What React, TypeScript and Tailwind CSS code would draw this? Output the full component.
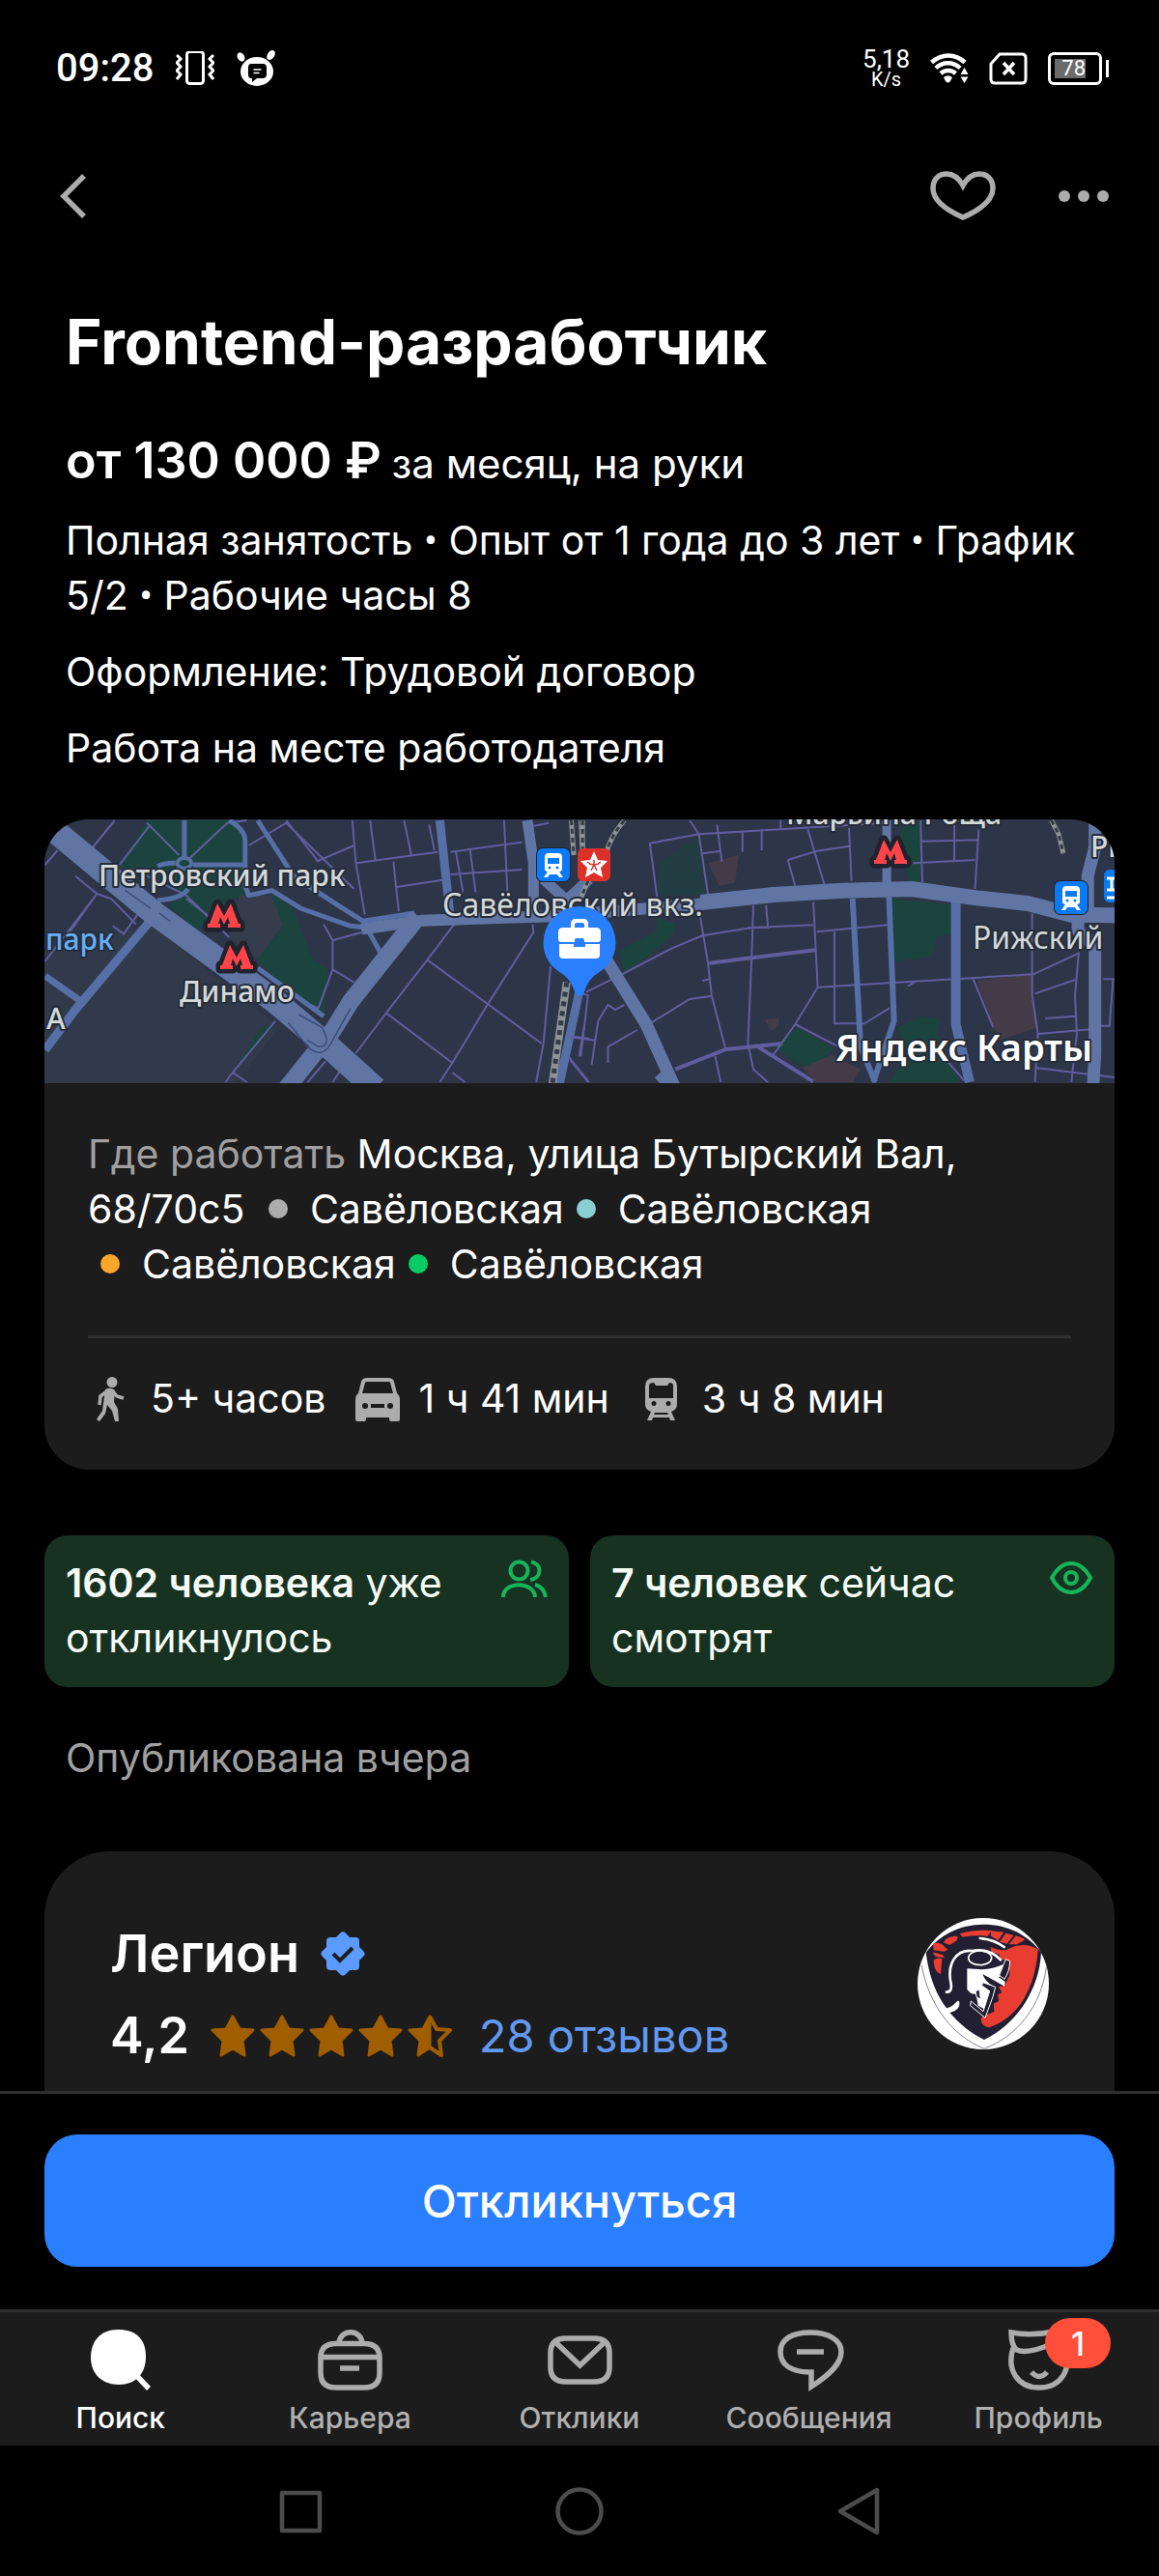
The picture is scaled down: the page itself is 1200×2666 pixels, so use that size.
import React from "react";

function VibrateIcon() {
  return (
    <svg viewBox="0 0 40 36" className="h-9 w-10" fill="none" stroke="#fff" strokeWidth="3" aria-hidden="true">
      <rect x="11.500" y="0.500" width="17" height="33" rx="3" />
      <path d="M1 4l4 4-4 4 4 4-4 4 4 4-4 5M39 4l-4 4 4 4-4 4 4 4-4 4 4 5" />
    </svg>
  );
}

function BotIcon() {
  return (
    <svg viewBox="0 0 40 38" className="h-[38px] w-10" aria-hidden="true">
      <ellipse cx="21" cy="22" rx="17" ry="15" fill="#fff" />
      <ellipse cx="4.500" cy="7" rx="3.600" ry="5" transform="rotate(-30 4.500 7)" fill="#fff" />
      <ellipse cx="35.500" cy="5" rx="3.600" ry="5.500" transform="rotate(35 35.500 5)" fill="#fff" />
      <path d="M15 14h12q4 0 4 4v7q0 4-4 4h-6l-5 4v-4h-1q-3 0-3-4v-7q0-4 3-4z" fill="#000" />
      <path d="M17.500 20h8M17.500 23.500h6" stroke="#fff" strokeWidth="1.500" />
    </svg>
  );
}

function WifiIcon() {
  return (
    <svg viewBox="0 0 40 34" className="h-[34px] w-10" fill="none" stroke="#fff" strokeWidth="4.500" aria-hidden="true">
      <path d="M1.500 10.500C12 1 26 1 36 10.500" />
      <path d="M6 16.500c7-7 18-7 25 0" />
      <path d="M11 22c4.500-4 11-4 15.500 0" />
      <path d="M14 26q4.500-3.500 9 0l-2 4q-2.500 3-5 0z" fill="#fff" stroke="none" />
      <path d="M35.500 16l4 7h-8zM35.500 32l4-6.500h-8z" fill="#fff" stroke="none" />
    </svg>
  );
}

function SimIcon() {
  return (
    <svg viewBox="0 0 40 34" className="h-[34px] w-10" fill="none" stroke="#fff" strokeWidth="3" aria-hidden="true">
      <path d="M11 2h23q4 0 4 4v22q0 4-4 4H6q-4 0-4-4V12z" />
      <path d="M15 11l11 12M26 11L15 23" strokeWidth="3.500" />
    </svg>
  );
}

function Battery() {
  return (
    <div className="flex items-center gap-1">
      <div className="flex h-[34px] w-14 rounded-md border-[3px] border-white p-1">
        <div className="flex w-8 items-center justify-end bg-[#6b6b6b] font-[Roboto] text-[22px] leading-none text-white">
          78
        </div>
      </div>
      <div className="h-[18px] w-[3px] bg-white" />
    </div>
  );
}

function StatusBar() {
  return (
    <div className="flex h-[142px] items-center justify-between pr-[52px] pl-[58px] font-[Roboto]">
      <div className="flex items-center gap-[23px]">
        <span className="text-[40px] leading-none font-medium">09:28</span>
        <VibrateIcon />
        <BotIcon />
      </div>
      <div className="flex items-center gap-[21px]">
        <div className="flex flex-col items-center">
          <span className="text-[26px] leading-[22px]">5,18</span>
          <span className="text-[20px] leading-5">K/s</span>
        </div>
        <WifiIcon />
        <SimIcon />
        <Battery />
      </div>
    </div>
  );
}

function Header() {
  return (
    <header className="flex h-[122px] items-center justify-between pr-[50px] pl-[61px]">
      <button type="button" aria-label="Назад">
        <svg viewBox="0 0 28 48" className="h-12 w-7" fill="none" stroke="#acacac" strokeWidth="5.500">
          <path d="M26 3L5 24l21 21" />
        </svg>
      </button>
      <div className="flex items-center gap-[61px]">
        <button type="button" aria-label="В избранное">
          <svg viewBox="0 0 72 56" className="h-14 w-[72px]" fill="none" stroke="#acacac" strokeWidth="5.500">
            <path d="M36 17C31 8 26 5 19 5 10.500 5 5 11 5 20c0 12 13 22 31 30 18-8 31-18 31-30 0-9-5.500-15-14-15-7 0-12 3-17 12z" />
          </svg>
        </button>
        <button type="button" aria-label="Ещё">
          <svg viewBox="0 0 56 14" className="h-[14px] w-14" fill="#acacac">
            <circle cx="8" cy="7" r="6" />
            <circle cx="28" cy="7" r="6" />
            <circle cx="48" cy="7" r="6" />
          </svg>
        </button>
      </div>
    </header>
  );
}

function Metro({ x, y }: { x: number; y: number }) {
  return (
    <path
      transform={`translate(${x} ${y})`}
      d="M0 25v-4h2L10 0l7 13L24 0l8 21h2v4H21v-4h2l-2-7-4 8-4-8-2 7h2v4z"
      fill="#ff4449"
      stroke="#20232d"
      strokeWidth="9"
      strokeLinejoin="round"
      paintOrder="stroke"
    />
  );
}

function StationSign({ x, y }: { x: number; y: number }) {
  return (
    <g transform={`translate(${x} ${y})`}>
      <rect x="-1" y="-1" width="36" height="36" rx="7" fill="#20232d" />
      <rect width="34" height="34" rx="6" fill="#0a7af5" />
      <path
        fillRule="evenodd"
        fill="#fff"
        d="M12 5h10q4 0 4 4v12q0 3-3 3l4 6h-4l-2-3h-8l-2 3H7l4-6q-3 0-3-3V9q0-4 4-4zm-1 5v6h12v-6zM13 18.500a1.500 1.500 0 1 0 0 3 1.500 1.500 0 0 0 0-3zm8 0a1.500 1.500 0 1 0 0 3 1.500 1.500 0 0 0 0-3z"
      />
    </g>
  );
}

function CityMap() {
  return (
    <svg
      viewBox="0 0 1108 273"
      preserveAspectRatio="xMidYMid slice"
      className="block h-[273px] w-full"
      fontFamily="'Noto Sans', sans-serif"
      role="img"
      aria-label="Карта"
    >
      <rect width="1108" height="273" fill="#2d3548" />

      {/* West half */}
      <g transform="matrix(0.3699 0 0 0.33333 -16 -18)">
        <path d="M0 460L340 380 700 700 560 900H0z" fill="#313a4a" />
        <path d="M330 57H590L605 120V200L620 290 560 300 470 400 390 320 440 290 250 200z" fill="#1c443f" />
        <path d="M680 285L740 330 790 480 835 520 825 670 750 610 640 490 700 400z" fill="#1c443f" />
        <path d="M650 700L690 690 570 840z" fill="#1c443f" />
        <path d="M590 290L680 290 710 380 640 490 560 420z" fill="#353d4c" />
        <g fill="none" stroke="#605d9f" strokeWidth="2">
          {[
            "M240 57L150 180M330 65L420 165M340 70L250 200M555 65L450 175M190 285L110 410M45 495L190 285 130 230",
            "M190 285L230 300 300 380M310 340L265 410 235 385M80 150L45 195M330 230L440 290 560 420",
            "M555 65L610 57M615 135L720 65 910 270M720 57L810 185M905 57L915 190 940 350M955 57L970 185M915 190L1145 155M1020 185L1035 340M1025 265L1170 240",
            "M1050 57L1070 165M1120 70L1135 150M805 185L910 135M1180 155L1380 125M1180 225L1380 210M1195 155L1215 280M1235 150L1250 280M1330 57L1340 300M1410 75L1455 65",
            "M825 380L850 430 850 520 810 640 750 610M850 430L930 405M850 520L910 560",
            "M1190 380L1115 490 1000 655 915 780M1115 490L1435 750M1000 655L1185 810 1150 870M1185 840L1220 870M1410 380L1412 405 1280 635 1185 810M1460 510L1440 750 1420 870",
            "M690 680L570 840 550 870M570 840L610 870M780 870L830 805M850 870L880 820M1510 725L1568 735M1555 690L1540 790M1510 790L1568 870M440 300L520 370",
          ].map((d) => (
            <path key={d} d={d} vectorEffect="non-scaling-stroke" />
          ))}
        </g>
        <g fill="none" stroke="#566fa6" strokeLinejoin="round">
          <path d="M350 355L130 645 45 770" strokeWidth="9" vectorEffect="non-scaling-stroke" />
          <path d="M45 540L150 622" strokeWidth="7" vectorEffect="non-scaling-stroke" />
          <path d="M435 57V175M360 200Q380 188 410 190M460 195H600M360 305Q430 300 445 270" strokeWidth="5" vectorEffect="non-scaling-stroke" />
          <ellipse cx="435" cy="190" rx="20" ry="16" strokeWidth="4" vectorEffect="non-scaling-stroke" />
          <path d="M560 57Q605 85 605 120V260L615 290 680 275 760 330 900 385 945 390" strokeWidth="5" vectorEffect="non-scaling-stroke" />
          <path d="M640 57L700 160 740 230 850 310 935 370 985 470M935 370L1080 345M640 515L825 665" strokeWidth="5" vectorEffect="non-scaling-stroke" />
          <path d="M1150 57L1178 345" strokeWidth="9" vectorEffect="non-scaling-stroke" />
          <path d="M1540 590L1485 875" strokeWidth="9" vectorEffect="non-scaling-stroke" />
        </g>
        <g fill="none" stroke="#6175a4" strokeLinejoin="round">
          <path d="M40 60L230 235 350 345 530 490 690 620 850 770 970 890" strokeWidth="25" vectorEffect="non-scaling-stroke" />
          <path d="M720 890L850 710 900 620 1090 355" strokeWidth="18" vectorEffect="non-scaling-stroke" />
          <path d="M930 395L1100 368 1600 350" strokeWidth="12" vectorEffect="non-scaling-stroke" />
          <path d="M1395 57L1412 190V350M1440 240L1510 310M1568 240L1480 330" strokeWidth="11" vectorEffect="non-scaling-stroke" />
        </g>
        <g fill="none" stroke="#3c4c7c" strokeWidth="1.500">
          <path d="M725 685L780 760Q820 800 845 750L900 640M755 660L820 700Q850 760 810 760L780 740" vectorEffect="non-scaling-stroke" />
          <path d="M270 275L340 330M365 345L395 370" vectorEffect="non-scaling-stroke" />
        </g>
        <g fill="none">
          <path d="M1505 560L1465 875" stroke="#8b9396" strokeWidth="8" vectorEffect="non-scaling-stroke" />
          <path d="M1505 560L1465 875" stroke="#343b48" strokeWidth="5" strokeDasharray="5 5" vectorEffect="non-scaling-stroke" />
          <path d="M1518 57L1525 165M1545 57L1550 165" stroke="#8b9396" strokeWidth="5" vectorEffect="non-scaling-stroke" />
          <path d="M1518 57L1525 165M1545 57L1550 165" stroke="#343b48" strokeWidth="3" strokeDasharray="5 4" vectorEffect="non-scaling-stroke" />
        </g>
      </g>

      {/* East half */}
      <g transform="matrix(0.37628 0 0 0.33333 544 -18)">
        <g fill="#1c443f">
          <path d="M245 190L350 110 375 290H240z" opacity=".6" />
          <path d="M920 57H965V250H935L905 120z" />
          <path d="M885 300L1050 318V410L1010 420 995 480 890 495z" />
          <path d="M240 360L290 375 285 410 215 480 150 530 135 460 240 400z" />
          <path d="M560 760L625 700 725 765 670 845zM900 700L960 670 1020 672 1010 720 1070 870H880L930 780z" />
        </g>
        <g fill="#433b48">
          <path d="M380 190L465 165 455 250 410 260z" />
          <path d="M1120 555L1275 535V600L1288 700 1180 740z" />
          <path d="M535 675L575 670 575 695 555 710zM640 825L720 785 800 830 780 870H680z" />
        </g>
        <g fill="none" stroke="#605d9f" strokeWidth="2">
          {[
            "M330 57L355 100 380 285M220 128L355 100 865 65M220 128L240 295M365 160L415 152M405 70L418 185M475 90V155M528 90V150M580 57V85",
            "M655 85L700 255M600 180L680 152 770 137M600 180L620 260M768 80L775 245M965 57L970 250M965 122L1125 118M945 190L1115 180M1058 57V180M1125 85L1115 270",
            "M45 590L135 540 280 455 365 415 500 390 670 382M358 350L380 500 390 600 428 765M505 320L500 490 490 750 505 830 545 870M540 320L545 390 490 390",
            "M380 500L675 460M670 310L682 575 620 690 560 785M680 403L875 382M728 403V688H810L880 640M682 575L1275 535M930 572L955 555",
            "M365 555L385 550M220 688L330 612 390 602M105 810V760L185 708M20 590L50 600 30 790M60 815L78 680 105 630 125 645 150 630M0 730L70 740M400 790L415 870M620 690L740 760",
            "M1108 545L1165 700M1272 345V600L1288 720 1280 870M1275 535L1400 470 1390 600 1395 720 1380 870M1280 595L1390 552M1308 672L1390 665M1290 720L1440 705M1468 550H1500M1495 550L1485 695H1455M1280 825L1500 855M1035 800L1085 865",
            "M0 800L50 870",
          ].map((d) => (
            <path key={d} d={d} vectorEffect="non-scaling-stroke" />
          ))}
          <path d="M385 500L675 460M290 830L430 768 585 750M510 755L670 868" strokeWidth="4" vectorEffect="non-scaling-stroke" />
        </g>
        <g fill="none" stroke="#566fa6" strokeLinejoin="round">
          <path d="M778 300L800 760 840 870M878 290L892 680 835 870" strokeWidth="6" vectorEffect="non-scaling-stroke" />
          <path d="M1062 310V690L1100 870" strokeWidth="10" vectorEffect="non-scaling-stroke" />
        </g>
        <g fill="none" stroke="#6175a4" strokeLinejoin="round">
          <path d="M100 490L210 690 290 890M245 870L275 840" strokeWidth="13" vectorEffect="non-scaling-stroke" />
          <path d="M0 350L350 318 560 290" strokeWidth="12" vectorEffect="non-scaling-stroke" />
          <path d="M360 312L560 288 750 275 940 270 1120 298 1260 315 1380 350 1510 352" strokeWidth="16" vectorEffect="non-scaling-stroke" />
          <path d="M872 57V270" strokeWidth="9" vectorEffect="non-scaling-stroke" />
          <path d="M1445 57V140L1425 230V340M1398 360V400L1445 450V780L1440 880" strokeWidth="13" vectorEffect="non-scaling-stroke" />
        </g>
        <g fill="none">
          <path d="M35 57V165M150 57Q110 110 100 160M50 245L30 300M1325 57L1345 100 1358 160" stroke="#8b9396" strokeWidth="5" vectorEffect="non-scaling-stroke" />
          <path d="M35 57V165M150 57Q110 110 100 160M50 245L30 300M1325 57L1345 100 1358 160" stroke="#343b48" strokeWidth="3" strokeDasharray="5 4" vectorEffect="non-scaling-stroke" />
        </g>
      </g>

      <Metro x={169} y={87} />
      <Metro x={182} y={130} />
      <Metro x={859} y={21} />
      <StationSign x={510} y={30} />
      <StationSign x={1046} y={64} />
      <g transform="translate(1097 52)">
        <rect width="34" height="34" rx="6" fill="#0a7af5" />
        <path d="M3 9h10M8 9v12M3 21h10M3 29h10" stroke="#fff" strokeWidth="3" />
      </g>
      <g transform="translate(552 30)">
        <rect width="34" height="34" rx="6" fill="#dc3029" />
        <path d="M17 3l4 9 10 1-7 7 2 10-9-5-9 5 2-10-7-7 10-1z" fill="#fff" />
        <path d="M17 12v5M12 16l5 1 5-1M14 23l3-6 3 6M10 14l3 2M24 14l-3 2" stroke="#dc3029" strokeWidth="1.500" fill="none" />
      </g>

      <g fill="#d3d9d9" stroke="#262d3b" strokeWidth="4" strokeLinejoin="round" paintOrder="stroke">
        <g fontSize="30" fontWeight="500">
          <text x="56" y="69">Петровский парк</text>
          <text x="140" y="189">Динамо</text>
          <text x="2" y="217">А</text>
          <text x="768" y="5">Марьина Роща</text>
          <text x="1083" y="39">Рижская</text>
          <text x="1" y="135" fill="#66aef5">парк</text>
        </g>
        <g fontSize="32">
          <text x="412" y="100">Савёловский вкз.</text>
          <text x="961" y="134">Рижский</text>
        </g>
        <text x="819" y="250" fontSize="38" fontWeight="600" fill="#fff">Яндекс Карты</text>
      </g>

      <path d="M554 90a37.500 37.500 0 0 1 37.500 37.500c0 16-9 26-19 32-8 5-11 12-13.500 19q-1.500 4-5 4t-5-4c-2.500-7-5.500-14-13.500-19-10-6-19-16-19-32A37.500 37.500 0 0 1 554 90z" fill="#2a7ffd" />
      <g fill="#fff">
        <path fillRule="evenodd" d="M545 112v-4q0-5 5-5h8q5 0 5 5v4h8q5 0 5 5v7q0 3-3 3h-38q-3 0-3-3v-7q0-5 5-5zm4 0h10v-3q0-2-2-2h-6q-2 0-2 2z" />
        <path d="M533 129h15v3h12v-3h15v11q0 4-4 4h-34q-4 0-4-4z" />
      </g>
      <rect x="549" y="123" width="10" height="9" rx="2" fill="#2a7ffd" />
    </svg>
  );
}

function WalkIcon() {
  return (
    <svg viewBox="0 0 46 46" className="size-[46px]" fill="none" stroke="#acacac" strokeWidth="3.500" strokeLinejoin="round" aria-hidden="true">
      <circle cx="25" cy="5.500" r="5.500" fill="#acacac" stroke="none" />
      <path d="M18 13q6-3 10 1l-1 12 4 7 1 13h-4l-3-11-5-6-2 9-6 8-3-2 6-9z" fill="#acacac" stroke="none" />
      <path d="M21 14l-8 6-1 9M26 15l4 5 7 2" />
    </svg>
  );
}

function CarIcon() {
  return (
    <svg viewBox="0 0 46 46" className="size-[46px]" fill="#acacac" aria-hidden="true">
      <path
        fillRule="evenodd"
        d="M12 1h22q5 0 6 4l3 12q3 2 3 7v20q0 2-2 2h-7q-2 0-2-2v-2H11v2q0 2-2 2H2q-2 0-2-2V24q0-5 3-7L6 5q1-4 6-4zm0 4q-2 0-2 1L7 17h32L36 6q0-1-2-1zM10 27a3 3 0 1 0 0 6 3 3 0 0 0 0-6zm26 0a3 3 0 1 0 0 6 3 3 0 0 0 0-6zM16 28v4h14v-4z"
      />
    </svg>
  );
}

function TrainIcon() {
  return (
    <svg viewBox="0 0 46 46" className="size-[46px]" fill="#acacac" aria-hidden="true">
      <path
        fillRule="evenodd"
        d="M15 1h15q9 0 9 9v18q0 6-6 8l4 9h-5l-1-3H14l-1 3H8l4-9q-6-2-6-8V10q0-9 9-9zm-5 8v13h25V9q0-3-4-3l-2 3H17l-2-3q-5 0-5 3zm5 16a2.500 2.500 0 1 0 0 5 2.500 2.500 0 0 0 0-5zm15 0a2.500 2.500 0 1 0 0 5 2.500 2.500 0 0 0 0-5zM16 37l-1 2h15l-1-2z"
      />
    </svg>
  );
}

function Station({ dot }: { dot: string }) {
  return (
    <span className="inline-block">
      <span className={`mr-[23px] ml-[13px] inline-block size-5 rounded-full align-[5px] ${dot}`} />
      Савёловская
    </span>
  );
}

function Travel({ icon, text }: { icon: React.ReactNode; text: string }) {
  return (
    <div className="flex items-center gap-[19px]">
      {icon}
      <span>{text}</span>
    </div>
  );
}

function LocationCard() {
  return (
    <section className="mx-[46px] mt-[45px] overflow-hidden rounded-[46px] bg-[#1c1c1c]">
      <CityMap />
      <div className="px-[45px] py-[45px]">
        <p>
          <span className="text-[#a0a0a0]">Где работать</span> Москва, улица Бутырский Вал, 68/70с5{" "}
          <Station dot="bg-[#acacac]" />
          <Station dot="bg-[#89cfd2]" />
          <Station dot="bg-[#f9a72b]" />
          <Station dot="bg-[#0aca66]" />
        </p>
        <div className="mt-[45px] flex flex-wrap gap-x-[31px] border-t-[3px] border-[#303030] pt-[34px]">
          <Travel icon={<WalkIcon />} text="5+ часов" />
          <Travel icon={<CarIcon />} text="1 ч 41 мин" />
          <Travel icon={<TrainIcon />} text="3 ч 8 мин" />
        </div>
      </div>
    </section>
  );
}

function StatCard({ strong, rest, icon }: { strong: string; rest: string; icon: React.ReactNode }) {
  return (
    <div className="flex items-start justify-between gap-4 rounded-3xl bg-[#183222] px-[22px] pt-[21px] pb-[22px]">
      <p className="text-[#f5fcf6]">
        <span className="font-semibold">{strong}</span> {rest}
      </p>
      <div className="mt-1 shrink-0">{icon}</div>
    </div>
  );
}

function Stats() {
  return (
    <section className="mx-[46px] mt-[68px] grid grid-cols-2 gap-[22px]">
      <StatCard
        strong="1602 человека"
        rest="уже откликнулось"
        icon={
          <svg viewBox="0 0 48 40" className="h-10 w-12" fill="none" stroke="#15b559" strokeWidth="4" aria-hidden="true">
            <circle cx="18.500" cy="11.500" r="9" />
            <path d="M31 2.500c12 2 11 17-1 18.500M2 39c0-17 32-17 33 0M35 26c7 2 10 6 11 13" />
          </svg>
        }
      />
      <StatCard
        strong="7 человек"
        rest="сейчас смотрят"
        icon={
          <svg viewBox="0 0 46 36" className="h-9 w-[46px]" fill="none" stroke="#15b559" strokeWidth="4" aria-hidden="true">
            <path d="M3 19C9 8 15 4 23 4s14 4 20 15c-6 11-12 15-20 15S9 30 3 19z" />
            <circle cx="23" cy="19" r="6" />
          </svg>
        }
      />
    </section>
  );
}

function Star({ half }: { half?: boolean }) {
  return (
    <svg viewBox="0 0 46 46" className="size-[46px]" stroke="#a05e00" strokeWidth="3" strokeLinejoin="round" aria-hidden="true">
      {half ? (
        <>
          <path d="M23 3v32l-12 8 2-15L2 17l14-1z" fill="#a05e00" />
          <path d="M23 3l7 13 14 1-11 11 2 15-12-8" fill="none" strokeWidth="4" />
        </>
      ) : (
        <path d="M23 3l7 13 14 1-11 11 2 15-12-7-12 7 2-15L2 17l14-1z" fill="#a05e00" />
      )}
    </svg>
  );
}

function LegionLogo() {
  return (
    <svg viewBox="150 108 408 408" className="size-[136px] shrink-0" role="img" aria-label="Легион">
      <circle cx="354" cy="312" r="204" fill="#fff" />
      <path d="M163 255C185 380 260 475 357 514 460 475 535 380 550 260" fill="none" stroke="#6f6f78" strokeWidth="2.500" />
      <path d="M176 215C220 160 280 128 355 128S490 158 534 214C530 320 465 435 357 486 318 468 282 438 250 402 274 396 284 384 279 366 270 362 266 384 240 388 200 335 184 275 176 215z" fill="#231f33" />
      <g fill="#e93d31">
        <path d="M281 157Q320 144 380 147L368 164Q325 160 290 167z" />
        <path d="M240 172Q256 162 275 165L272 178 250 192 230 184z" />
        <path d="M198 188Q214 182 226 190L244 207 232 212 200 208z" />
        <path d="M196 214L228 222 234 232 206 228z" />
        <path d="M200 238Q214 230 226 234L222 282Q200 275 200 238z" />
        <path d="M378 148L418 152 400 178 378 164z" />
        <path d="M424 155L448 162 428 188 405 182zM455 163Q475 168 484 176L458 190 434 190z" />
        <path d="M376 198Q420 215 436 202 480 180 524 205 520 290 480 360 440 425 372 448 348 444 347 422L352 412 376 404 388 398 386 374 402 366 400 345 412 340 402 322 420 318 436 286 434 240 408 236 404 222 380 212z" />
      </g>
      <g fill="none" stroke="#fff" strokeLinecap="round">
        <path d="M344 171Q388 175 419 198" strokeWidth="8" />
        <path d="M240 338Q258 338 254 312C240 250 270 205 320 210 360 202 388 216 408 238" strokeWidth="8" />
        <ellipse cx="344" cy="232" rx="36" ry="22" strokeWidth="5" />
      </g>
      <path d="M304 265L350 268Q385 266 416 252L418 282 402 292 422 306 420 320Q388 302 352 282 360 306 388 322L378 350 364 395 338 380 332 345 316 342 304 330z" fill="#fff" />
      <path d="M352 308L392 322 384 352 360 418 314 380 316 366 354 398 374 335 350 318zM330 335L342 330 346 360 334 354z" fill="#231f33" stroke="#fff" strokeWidth="3" />
      <path d="M424 236L437 242Q436 274 420 298L404 286 414 260z" fill="#231f33" stroke="#fff" strokeWidth="3" />
    </svg>
  );
}

function CompanyCard() {
  return (
    <section className="mx-[46px] mt-[68px] flex flex-1 items-start justify-between rounded-t-[68px] bg-[#1c1c1c] px-[68px] pt-[69px] pb-6">
      <div className="flex flex-col gap-[21px] pt-[5px]">
        <div className="flex items-center gap-[22px]">
          <h2 className="text-[54px] leading-[64px] font-semibold">Легион</h2>
          <svg viewBox="0 0 46 46" className="size-[46px]" aria-hidden="true">
            <rect x="6" y="6" width="34" height="34" rx="4" fill="#5b9bff" />
            <rect x="6" y="6" width="34" height="34" rx="4" fill="#5b9bff" transform="rotate(45 23 23)" />
            <path d="M13 23l7 7 13-13" fill="none" stroke="#1c1c1c" strokeWidth="4" />
          </svg>
        </div>
        <div className="flex items-center">
          <span className="text-[52px] leading-[64px] font-semibold">4,2</span>
          <div className="ml-[22px] flex gap-[5px]">
            <Star />
            <Star />
            <Star />
            <Star />
            <Star half />
          </div>
          <a href="#reviews" className="ml-7 text-[47px] leading-[64px] text-[#6299f0]">
            28 отзывов
          </a>
        </div>
      </div>
      <LegionLogo />
    </section>
  );
}

const TABS = [
  {
    label: "Поиск",
    active: true,
    icon: (
      <>
        <path d="M33 5c19 0 29 10 29 28S51 62 34 62 5 51 5 34 15 5 33 5z" fill="#fff" stroke="none" />
        <path d="M50 50l15 16" stroke="#fff" />
      </>
    ),
  },
  {
    label: "Карьера",
    icon: (
      <path d="M22 19.500H51Q67 19.500 67 34V50Q67 65 51 65H22Q6 65 6 50V34Q6 19.500 22 19.500zM6 33.500h61M26 45h20M25 19C26 4 48 4 49 19" />
    ),
  },
  {
    label: "Отклики",
    icon: (
      <path d="M22 14H51Q67 14 67 29V44Q67 59 51 59H22Q6 59 6 44V29Q6 14 22 14zM10 17l26.500 25L63 17" />
    ),
  },
  {
    label: "Сообщения",
    icon: <path d="M36 49C17 49 6 41 6 28S18 8 37 8s32 8 32 20-11 23-31 36V49zM23 28h28" />,
  },
  {
    label: "Профиль",
    badge: "1",
    icon: (
      <path d="M8 8q20 4 45-1 14 0 12 12-14 0-23 4-20 7-28 3Q8 22 8 8zM10 24C3 46 14 65 37 65s34-19 27-42M29 49q8 9 16 0" />
    ),
  },
];

function TabBar() {
  return (
    <nav className="flex border-t-[3px] border-[#303030] bg-[#1c1c1c] px-1.5 pt-[13px] pb-[11px]">
      {TABS.map((tab) => (
        <button
          key={tab.label}
          type="button"
          aria-current={tab.active ? "page" : undefined}
          className="flex flex-1 basis-0 flex-col items-center gap-1.5"
        >
          <span className="relative">
            <svg viewBox="0 0 72 72" className="block size-[72px]" fill="none" stroke="#acacac" strokeWidth="5.500" aria-hidden="true">
              {tab.icon}
            </svg>
            {tab.badge && (
              <span className="absolute -top-[7px] left-[43px] flex h-[52px] w-[68px] items-center justify-center rounded-full bg-[#ff4f3b] text-[34px] font-medium text-white">
                {tab.badge}
              </span>
            )}
          </span>
          <span className={`text-[30px] leading-9 font-medium ${tab.active ? "text-white" : "text-[#b0b0b0]"}`}>
            {tab.label}
          </span>
        </button>
      ))}
    </nav>
  );
}

function SystemBar() {
  return (
    <div className="flex h-[135px] items-center justify-center gap-[239px] bg-black">
      {[
        { label: "Недавние", d: "M6 6h39v39H6z" },
        { label: "Домой", d: "M25 2.500a22.500 22.500 0 1 1 0 45 22.500 22.500 0 0 1 0-45z" },
        { label: "Назад", d: "M44 3v44L6 25z" },
      ].map((b) => (
        <button key={b.label} type="button" aria-label={b.label}>
          <svg viewBox="0 0 50 50" className="size-[50px]" fill="none" stroke="#4c4c4c" strokeWidth="4.500" strokeLinejoin="round">
            <path d={b.d} />
          </svg>
        </button>
      ))}
    </div>
  );
}

function Bullet() {
  return <span className="font-[Roboto] leading-none">•</span>;
}

export default function App() {
  return (
    <div className="flex min-h-screen flex-col bg-black font-[Inter,sans-serif] text-[41px] leading-[57px] text-white">
      <StatusBar />
      <Header />
      <main className="flex flex-1 flex-col">
        <div className="px-[68px]">
          <h1 className="mt-[50px] text-[64px] leading-[80px] font-bold">Frontend-разработчик</h1>
          <p className="mt-[51px] text-[52px] leading-[64px]">
            <span className="font-semibold">от 130 000 ₽</span>{" "}
            <span className="-ml-1 text-[42px] leading-none">за месяц, на руки</span>
          </p>
          <div className="mt-[22px] flex flex-col gap-[22px]">
            <p>
              Полная занятость <Bullet /> Опыт от 1 года до 3 лет <Bullet /> График 5/2 <Bullet /> Рабочие часы 8
            </p>
            <p>Оформление: Трудовой договор</p>
            <p>Работа на месте работодателя</p>
          </div>
        </div>
        <LocationCard />
        <Stats />
        <p className="mx-[68px] mt-[45px] text-[#a0a0a0]">Опубликована вчера</p>
        <CompanyCard />
      </main>
      <footer>
        <div className="border-t-[3px] border-[#303030] bg-black px-[46px] pt-[42px] pb-11">
          <button type="button" className="w-full rounded-[34px] bg-[#2a7ffe] py-10 text-[47px] leading-[57px] font-medium">
            Откликнуться
          </button>
        </div>
        <TabBar />
        <SystemBar />
      </footer>
    </div>
  );
}
